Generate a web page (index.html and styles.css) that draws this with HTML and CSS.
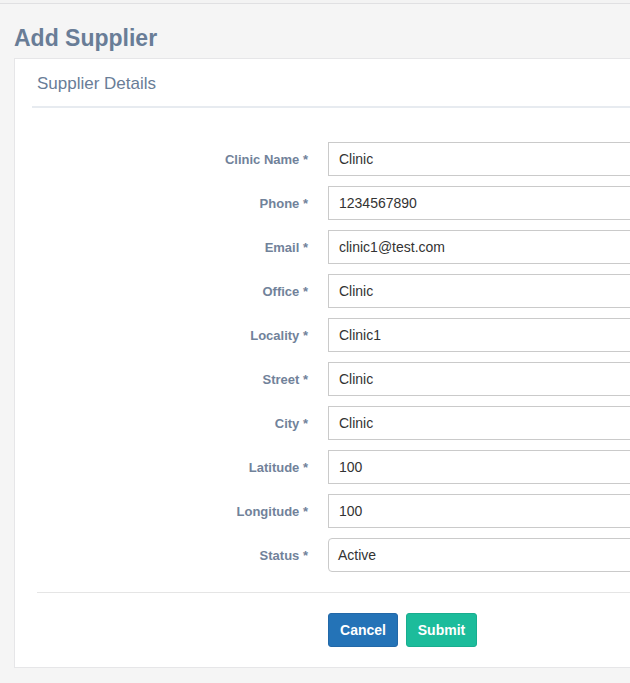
FILE: index.html
```html
<!DOCTYPE html>
<html>
<head>
<meta charset="utf-8">
<link rel="stylesheet" href="styles.css">
</head>
<body>
<div class="topbar"></div>
<div class="page">
  <h1 class="page-title">Add Supplier</h1>
  <div class="card">
    <div class="card-head">Supplier Details</div>
    <form class="form">
      <div class="row"><label class="lbl">Clinic Name *</label><input class="field" value="Clinic"></div>
      <div class="row"><label class="lbl">Phone *</label><input class="field" value="1234567890"></div>
      <div class="row"><label class="lbl">Email *</label><input class="field" value="clinic1@test.com"></div>
      <div class="row"><label class="lbl">Office *</label><input class="field" value="Clinic"></div>
      <div class="row"><label class="lbl">Locality *</label><input class="field" value="Clinic1"></div>
      <div class="row"><label class="lbl">Street *</label><input class="field" value="Clinic"></div>
      <div class="row"><label class="lbl">City *</label><input class="field" value="Clinic"></div>
      <div class="row"><label class="lbl">Latitude *</label><input class="field" value="100"></div>
      <div class="row"><label class="lbl">Longitude *</label><input class="field" value="100"></div>
      <div class="row"><label class="lbl">Status *</label><div class="field select">Active</div></div>
      <div class="actions">
        <button type="button" class="btn btn-blue">Cancel</button>
        <button type="button" class="btn btn-green">Submit</button>
      </div>
    </form>
  </div>
</div>
</body>
</html>
```

FILE: styles.css
```css
html, body {
  margin: 0;
  padding: 0;
  background: #f5f5f5;
  overflow: hidden;
  font-family: "Liberation Sans", Arial, sans-serif;
}
.topbar {
  height: 3px;
  background: #f3f3f3;
  border-bottom: 1px solid #e0e0e2;
}
.page {
  padding: 0 0 16px 14px;
}
.page-title {
  margin: 0;
  padding-top: 20px;
  height: 34px;
  font-size: 23px;
  line-height: 28px;
  font-weight: bold;
  color: #697d97;
}
.card {
  width: 720px;
  background: #fff;
  border: 1px solid #e6e6e8;
  padding: 0 0 20px 17px;
}
.card-head {
  height: 47px;
  line-height: 50px;
  padding-left: 5px;
  font-size: 17px;
  color: #697d97;
  border-bottom: 2px solid #e7ebf0;
}
.form {
  padding-top: 34px;
}
.row {
  display: flex;
  align-items: center;
  margin-bottom: 10px;
}
.lbl {
  width: 276px;
  flex: none;
  text-align: right;
  font-size: 13px;
  font-weight: bold;
  color: #71829a;
  margin-right: 20px;
}
.field {
  box-sizing: border-box;
  flex: 1;
  height: 34px;
  border: 1px solid #cacaca;
  border-radius: 0;
  padding: 0 10px;
  font-family: "Liberation Sans", Arial, sans-serif;
  font-size: 14px;
  color: #333;
  background: #fff;
  outline: none;
  margin: 0;
}
.select {
  border-radius: 4px;
  line-height: 32px;
  padding-left: 9px;
}
.actions {
  margin-top: 20px;
  margin-left: 5px;
  border-top: 1px solid #e5e5e5;
  padding-top: 20px;
  padding-left: 291px;
  display: flex;
  gap: 8px;
}
.btn {
  height: 34px;
  border-radius: 3px;
  font-family: "Liberation Sans", Arial, sans-serif;
  font-size: 14px;
  font-weight: bold;
  color: #fff;
  cursor: pointer;
}
.btn-blue {
  width: 70px;
  padding: 0;
  background: #2473b7;
  border: 1px solid #2268a8;
}
.btn-green {
  width: 71px;
  padding: 0;
  background: #1cbc9b;
  border: 1px solid #19ad8f;
}
```
